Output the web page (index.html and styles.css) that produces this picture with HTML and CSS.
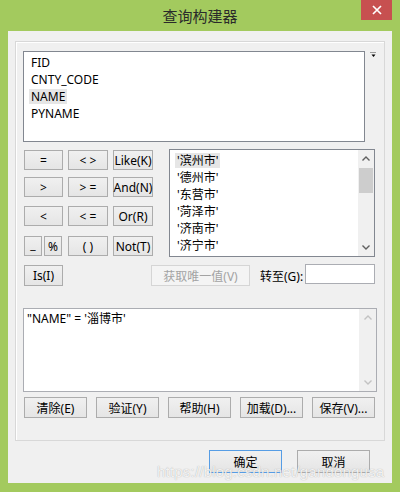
FILE: index.html
```html
<!DOCTYPE html>
<html lang="zh-CN">
<head>
    <meta charset="UTF-8">
    <title>查询构建器</title>
    <link rel="stylesheet" href="styles.css">
</head>
<body>
<div class="window">
    <div class="titlebar">
        <span></span>
        <span class="title">查询构建器</span>
        <button class="btn-close" type="button">
            <svg width="10" height="10" viewBox="0 0 10 10">
                <path d="M1 1L9 9M9 1L1 9" stroke="#fff" stroke-width="1.7" fill="none"/>
            </svg>
        </button>
    </div>
    <div class="client">
        <div class="panel">
            <div class="row-fields">
                <ul class="list list-fields">
                    <li>FID</li>
                    <li>CNTY_CODE</li>
                    <li class="sel">NAME</li>
                    <li>PYNAME</li>
                </ul>
                <svg class="icon-menu" width="7" height="6" viewBox="0 0 7 6">
                    <path d="M0 0.5H6" stroke="#9a9a9a" stroke-width="1"/>
                    <path d="M1.5 2.5H5.5L3.5 5Z" fill="#000"/>
                </svg>
            </div>
            <div class="row-ops">
                <div class="ops">
                    <button class="btn" type="button">=</button>
                    <button class="btn" type="button">&lt; &gt;</button>
                    <button class="btn" type="button">Like(K)</button>
                    <button class="btn" type="button">&gt;</button>
                    <button class="btn" type="button">&gt; =</button>
                    <button class="btn" type="button">And(N)</button>
                    <button class="btn" type="button">&lt;</button>
                    <button class="btn" type="button">&lt; =</button>
                    <button class="btn" type="button">Or(R)</button>
                    <div class="pair">
                        <button class="btn btn-low" type="button">_</button>
                        <button class="btn" type="button">%</button>
                    </div>
                    <button class="btn" type="button">( )</button>
                    <button class="btn" type="button">Not(T)</button>
                </div>
                <div class="values">
                    <ul class="list list-values">
                        <li class="sel">'滨州市'</li>
                        <li>'德州市'</li>
                        <li>'东营市'</li>
                        <li>'菏泽市'</li>
                        <li>'济南市'</li>
                        <li>'济宁市'</li>
                    </ul>
                    <div class="scrollbar">
                        <div class="sb-arrow">
                            <svg width="8" height="5" viewBox="0 0 8 5"><path d="M0.5 4.5L4 1L7.5 4.5" stroke="#606060" stroke-width="1.4" fill="none"/></svg>
                        </div>
                        <div class="sb-thumb"></div>
                        <div class="sb-space"></div>
                        <div class="sb-arrow">
                            <svg width="8" height="5" viewBox="0 0 8 5"><path d="M0.5 0.5L4 4L7.5 0.5" stroke="#606060" stroke-width="1.4" fill="none"/></svg>
                        </div>
                    </div>
                </div>
            </div>
            <div class="row-unique">
                <button class="btn btn-is" type="button">Is(I)</button>
                <button class="btn btn-unique" type="button" disabled>获取唯一值(V)</button>
                <label class="goto" for="goto">转至(G):</label>
                <input id="goto" class="goto-input">
            </div>
            <div class="expr">
                <div class="expr-text">"NAME" = '淄博市'</div>
                <div class="scrollbar disabled">
                    <div class="sb-arrow">
                        <svg width="8" height="5" viewBox="0 0 8 5"><path d="M0.5 4.5L4 1L7.5 4.5" stroke="#c2c2c2" stroke-width="1.4" fill="none"/></svg>
                    </div>
                    <div class="sb-space"></div>
                    <div class="sb-arrow">
                        <svg width="8" height="5" viewBox="0 0 8 5"><path d="M0.5 0.5L4 4L7.5 0.5" stroke="#c2c2c2" stroke-width="1.4" fill="none"/></svg>
                    </div>
                </div>
            </div>
            <div class="row-actions">
                <button class="btn" type="button">清除(E)</button>
                <button class="btn" type="button">验证(Y)</button>
                <button class="btn" type="button">帮助(H)</button>
                <button class="btn" type="button">加载(D)...</button>
                <button class="btn" type="button">保存(V)...</button>
            </div>
        </div>
        <div class="footer">
            <button class="btn btn-ok" type="button">确定</button>
            <button class="btn" type="button">取消</button>
        </div>
        <div class="watermark">https://blog.csdn.net/gandongusa</div>
    </div>
</div>
</body>
</html>
```

FILE: styles.css
```css
* {
    box-sizing: border-box;
    margin: 0;
    padding: 0;
}

body {
    width: 400px;
    height: 492px;
    overflow: hidden;
    font-family: "Noto Sans", "Noto Sans CJK SC", sans-serif;
    font-size: 12px;
    color: #000;
}

.window {
    height: 492px;
    background: #a3ca5e;
    padding: 0 8px 9px;
    display: flex;
    flex-direction: column;
}

.titlebar {
    height: 31px;
    display: grid;
    grid-template-columns: 31px 1fr 31px;
}

.title {
    text-align: center;
    font-family: "Noto Sans CJK SC", sans-serif;
    font-size: 15px;
    line-height: 31px;
    color: #2a2a2a;
}

.btn-close {
    height: 20px;
    background: #c75050;
    border: none;
    display: flex;
    align-items: center;
    justify-content: center;
}

.client {
    flex: 1;
    position: relative;
    background: #f0f0f0;
    padding: 10px 7px 0;
}

.panel {
    height: 400px;
    border: 1px solid #d8d8d8;
    box-shadow: inset 1px 1px 0 #fff;
    padding: 9px 7px 0;
}

.row-fields {
    display: flex;
    align-items: flex-start;
}

.icon-menu {
    margin: 1px 0 0 5px;
}

.list {
    list-style: none;
    background: #fff;
    border: 1px solid #828790;
    padding-top: 3px;
}

.list li {
    width: fit-content;
    height: 15px;
    line-height: 15px;
    padding: 0 2px;
    margin: 0 0 2px 5px;
    white-space: nowrap;
}

.list li.sel {
    background: #e6e6e6;
}

.list-fields {
    width: 343px;
    height: 91px;
}

.row-ops {
    display: flex;
    margin-top: 7px;
}

.ops {
    display: grid;
    grid-template-columns: 39px 40px 40px;
    grid-template-rows: 27px 29px 30px 20px;
    column-gap: 5px;
    align-items: start;
    margin: 1px 0 0 1px;
}

.ops .btn {
    height: 20px;
}

.pair {
    display: flex;
    gap: 2px;
}

.pair .btn {
    width: 18px;
}

.btn-low {
    align-items: flex-end !important;
    padding-bottom: 2px !important;
}

.btn {
    font: inherit;
    color: #000;
    border: 1px solid #acacac;
    background: linear-gradient(#f0f0f0, #e5e5e5);
    display: flex;
    align-items: center;
    justify-content: center;
    white-space: nowrap;
    padding: 0;
}

.btn:disabled {
    color: #a3a3a3;
    border-color: #d5d5d5;
    background: #f4f4f4;
}

.values {
    display: flex;
    width: 206px;
    height: 108px;
    margin-left: 16px;
    background: #fff;
    border: 1px solid #828790;
}

.list-values {
    flex: 1;
    border: none;
    background: transparent;
}

.scrollbar {
    width: 16px;
    display: flex;
    flex-direction: column;
    background: #f0f0f0;
}

.sb-arrow {
    height: 17px;
    display: flex;
    align-items: center;
    justify-content: center;
}

.sb-thumb {
    height: 25px;
    margin: 1px 1px 0;
    background: #cdcdcd;
}

.sb-space {
    flex: 1;
}

.row-unique {
    display: flex;
    align-items: flex-start;
    height: 22px;
    margin-top: 7px;
}

.btn-is {
    width: 39px;
    height: 21px;
    margin: 1px 0 0 1px;
}

.btn-unique {
    width: 99px;
    height: 21px;
    margin: 1px 0 0 88px;
}

.goto {
    width: 45px;
    margin: 3px 0 0 10px;
    line-height: 20px;
    white-space: nowrap;
}

.goto-input {
    width: 70px;
    height: 20px;
    border: 1px solid #abadb3;
    background: #fff;
    outline: none;
}

.expr {
    display: flex;
    width: 354px;
    height: 84px;
    margin-top: 22px;
    background: #fff;
    border: 1px solid #abadb3;
}

.expr-text {
    flex: 1;
    padding: 2px 3px;
    line-height: 15px;
    white-space: nowrap;
}

.expr .scrollbar {
    width: 17px;
}

.row-actions {
    display: flex;
    gap: 9px;
    margin: 5px 0 0 1px;
}

.row-actions .btn {
    width: 63px;
    height: 21px;
}

.footer {
    display: flex;
    justify-content: flex-end;
    gap: 15px;
    margin-top: 9px;
    padding-right: 15px;
}

.footer .btn {
    width: 73px;
    height: 23px;
}

.btn-ok {
    border-color: #569de5;
}

.watermark {
    position: absolute;
    left: 149px;
    top: 433px;
    font-family: "Liberation Sans", sans-serif;
    font-size: 15px;
    line-height: 16px;
    letter-spacing: 0.2px;
    color: rgba(255, 255, 255, 0.85);
    text-shadow: 0 0 1px rgba(110, 110, 110, 0.6);
    white-space: nowrap;
}
```
